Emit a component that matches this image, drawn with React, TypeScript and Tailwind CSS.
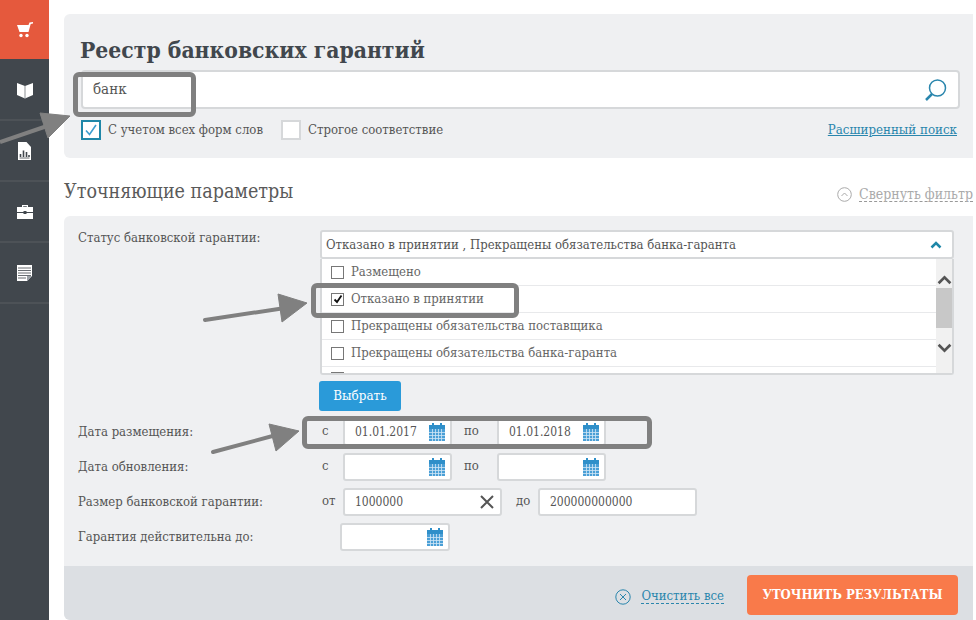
import { type ReactNode } from 'react';

const font = "font-['DejaVu_Serif_Condensed','DejaVu_Serif',serif]";

const CalendarIcon = () => (
  <svg width="16" height="18" viewBox="0 0 16 18" className="shrink-0">
    <rect x="3" y="0" width="2" height="3" fill="#2f8fc9" />
    <rect x="11" y="0" width="2" height="3" fill="#2f8fc9" />
    <rect x="0" y="2" width="16" height="4" fill="#2f8fc9" />
    <rect x="0" y="6" width="16" height="12" fill="#4a9fd6" />
    <path d="M3.5 6v12M6.5 6v12M9.5 6v12M12.5 6v12M0 9.5h16M0 12.5h16M0 15.5h16" stroke="#cfe6f5" strokeWidth="0.8" />
  </svg>
);

const Field = ({ width, value, icon }: { width: string; value?: string; icon?: ReactNode }) => (
  <div className={`flex h-[28px] items-center justify-between rounded-[3px] border-2 border-[#d6d8da] bg-white pl-[10px] pr-[5px] text-[12px] text-[#555] ${width}`}>
    <span>{value}</span>
    {icon}
  </div>
);

const Row = ({ label, children }: { label: string; children: ReactNode }) => (
  <div className="mt-[7px] flex h-[28px] items-center">
    <div className="w-[242px] text-[13px] text-[#555]">{label}</div>
    {children}
  </div>
);

const Prefix = ({ text, width }: { text: string; width: string }) => (
  <div className={`-mt-[3px] pl-[2px] text-[13px] text-[#555] ${width}`}>{text}</div>
);

const ListItem = ({ label, checked, className }: { label: string; checked?: boolean; className?: string }) => (
  <div className={`flex h-[27px] shrink-0 items-center gap-[7px] border-b border-[#e8e9eb] pl-[9px] text-[13px] text-[#666] ${className ?? ''}`}>
    <span className="flex h-[13px] w-[13px] items-center justify-center border border-[#777] bg-white">
      {checked && (
        <svg width="10" height="10" viewBox="0 0 10 10">
          <path d="M1.5 5.5l2.5 2.5 4.5-6.5" fill="none" stroke="#111" strokeWidth="1.8" />
        </svg>
      )}
    </span>
    {label}
  </div>
);

const SideItem = ({ children, active }: { children: ReactNode; active?: boolean }) => (
  <div className={`flex items-center justify-center ${active ? 'h-[60px] border-b border-[#41474d] bg-[#e5593d]' : 'h-[61px] border-b-2 border-[#4d5257]'}`}>
    {children}
  </div>
);

export default function App() {
  return (
    <div className={`relative flex h-[620px] w-[976px] overflow-hidden bg-white ${font}`}>
      <aside className="w-[49px] shrink-0 bg-[#41474d]">
        <SideItem active>
          <svg width="18" height="18" viewBox="0 0 18 18" fill="#fff">
            <path d="M1 4h11.5l1-2.5L17 1v1.5l-2.3.4L12.5 11H3.5z" />
            <circle cx="5" cy="14.5" r="1.7" />
            <circle cx="11" cy="14.5" r="1.7" />
          </svg>
        </SideItem>
        <SideItem>
          <svg width="18" height="18" viewBox="0 0 18 18" fill="#fff">
            <path d="M1 2l8 3 8-3v12l-8 3.5L1 14z" />
            <path d="M9 5v12" stroke="#41474d" strokeWidth="0.6" />
          </svg>
        </SideItem>
        <SideItem>
          <svg width="15" height="18" viewBox="0 0 15 18">
            <path d="M1 0h8.5L14 5v13H1z" fill="#fff" />
            <path d="M3.5 15v-3M6.5 15V8.5M9.5 15v-5M12 15v-2" stroke="#41474d" strokeWidth="1.6" />
            <path d="M2.5 16h10" stroke="#41474d" strokeWidth="0.8" />
          </svg>
        </SideItem>
        <SideItem>
          <svg width="16" height="16" viewBox="0 0 16 16" fill="#fff">
            <path d="M5 3V1h6v2h-1.2V2.2H6.200V3z" />
            <path d="M0 3h16v5H9.500V7h-3v1H0zM0 9h6.500v1h3V9H16v6H0z" />
          </svg>
        </SideItem>
        <SideItem>
          <svg width="15" height="16" viewBox="0 0 15 16">
            <path d="M0 0h15v11l-5 5H0z" fill="#fff" />
            <path d="M1 3h13M1 5.500h13M1 8h13M1 10.500h13M1 13h8" stroke="#41474d" strokeWidth="0.8" />
            <path d="M10 16v-5h5z" fill="#9aa0a5" />
          </svg>
        </SideItem>
      </aside>

      <main className="ml-[15px] mr-[3px] flex min-w-0 flex-1 flex-col pt-[14px]">
        <section className="h-[144px] rounded-l-[6px] bg-[#eff0f2] pl-[16px] pr-[13px] pt-[21px]">
          <h1 className="h-[35px] text-[22.700px] font-bold leading-[30px] text-[#41474d]">Реестр банковских гарантий</h1>
          <div className="ml-px flex h-[39px] items-center justify-between rounded-[4px] border-2 border-[#d6d8da] bg-white pl-[10px] pr-[10px] text-[15px] text-[#555]">
            банк
            <svg width="24" height="24" viewBox="0 0 24 24" fill="none" stroke="#2a86ad">
              <circle cx="13.500" cy="10" r="8" strokeWidth="1.500" />
              <path d="M8 16l-6 6" strokeWidth="2.500" />
            </svg>
          </div>
          <div className="ml-px mt-[11px] flex items-center pr-[3px] text-[13px] text-[#555]">
            <span className="flex h-[20px] w-[20px] items-center justify-center border-2 border-[#1f87a8] bg-white">
              <svg width="14" height="14" viewBox="0 0 14 14">
                <path d="M2 7.500l3.500 4L12 2" fill="none" stroke="#3d9fd0" strokeWidth="1.600" />
              </svg>
            </span>
            <span className="ml-[7px] w-[173px]">С учетом всех форм слов</span>
            <span className="h-[20px] w-[20px] border-2 border-[#d6d8da] bg-white" />
            <span className="ml-[7px]">Строгое соответствие</span>
            <a className="ml-auto text-[13.200px] text-[#2a86ad] underline">Расширенный поиск</a>
          </div>
        </section>

        <div className="flex h-[58px] items-center justify-between pt-[10px]">
          <h2 className="text-[19.500px] text-[#5a5a5a]">Уточняющие параметры</h2>
          <div className="flex items-center gap-[7px] pt-[4px] text-[14px] text-[#aaa]">
            <svg width="15" height="15" viewBox="0 0 15 15" fill="none" stroke="#aaa">
              <circle cx="7.500" cy="7.500" r="6.800" />
              <path d="M4.500 9l3-3 3 3" />
            </svg>
            <span className="whitespace-nowrap border-b border-dashed border-[#999] leading-[14px]">Свернуть фильтр</span>
          </div>
        </div>

        <section className="flex flex-1 flex-col rounded-l-[6px] bg-[#eff0f2]">
          <div className="h-[350px] px-[14px] pt-[14px]">
            <div className="flex">
              <div className="-mt-[2px] w-[242px] text-[13px] text-[#555]">Статус банковской гарантии:</div>
              <div className="w-[634px]">
                <div className="flex h-[29px] items-center justify-between rounded-[3px] border-2 border-[#d6d8da] bg-white pl-[4px] pr-[10px] text-[13px] text-[#555]">
                  Отказано в принятии , Прекращены обязательства банка-гаранта
                  <svg width="12" height="8" viewBox="0 0 12 8" fill="none" stroke="#1f87a8" strokeWidth="2.500">
                    <path d="M1.500 6.500L6 2l4.500 4.500" />
                  </svg>
                </div>
                <div className="flex h-[116px] overflow-hidden rounded-b-[3px] border-2 border-t-0 border-[#d6d8da] bg-white">
                  <div className="flex min-w-0 flex-1 flex-col">
                    <ListItem label="Размещено" />
                    <ListItem label="Отказано в принятии" checked />
                    <ListItem label="Прекращены обязательства поставщика" />
                    <ListItem label="Прекращены обязательства банка-гаранта" />
                    <ListItem label="" className="-mt-[2px]" />
                  </div>
                  <div className="flex w-[16px] shrink-0 flex-col items-center bg-[#f1f1f1] pt-[16px]">
                    <svg width="15" height="10" viewBox="0 0 14 9" fill="none" stroke="#555" strokeWidth="2.500">
                      <path d="M1.500 7.500L7 2l5.500 5.500" />
                    </svg>
                    <div className="mt-[3px] h-[40px] w-full bg-[#c8c8c8]" />
                    <svg className="mt-[15px]" width="15" height="10" viewBox="0 0 14 9" fill="none" stroke="#555" strokeWidth="2.500">
                      <path d="M1.500 1.500L7 7l5.500-5.500" />
                    </svg>
                  </div>
                </div>
                <button className="-ml-px mt-[6px] flex h-[30px] w-[82px] items-center justify-center rounded-[3px] bg-[#2a9ad9] text-[13.300px] text-white">
                  Выбрать
                </button>
              </div>
            </div>

            <div>
              <Row label="Дата размещения:">
                <Prefix text="с" width="w-[23px]" />
                <Field width="w-[109px]" value="01.01.2017" icon={<CalendarIcon />} />
                <Prefix text="по" width="w-[45px] pl-[12px]" />
                <Field width="w-[109px]" value="01.01.2018" icon={<CalendarIcon />} />
              </Row>
              <Row label="Дата обновления:">
                <Prefix text="с" width="w-[23px]" />
                <Field width="w-[109px]" icon={<CalendarIcon />} />
                <Prefix text="по" width="w-[45px] pl-[12px]" />
                <Field width="w-[109px]" icon={<CalendarIcon />} />
              </Row>
              <Row label="Размер банковской гарантии:">
                <Prefix text="от" width="w-[23px]" />
                <Field
                  width="w-[159px]"
                  value="1000000"
                  icon={
                    <svg width="14" height="14" viewBox="0 0 14 14" stroke="#555" strokeWidth="2" className="mr-[1px]">
                      <path d="M1 1l12 12M13 1L1 13" />
                    </svg>
                  }
                />
                <Prefix text="до" width="w-[36px] pl-[14px]" />
                <Field width="w-[159px]" value="200000000000" />
              </Row>
              <Row label="Гарантия действительна до:">
                <div className="w-[20px]" />
                <Field width="w-[110px]" icon={<CalendarIcon />} />
              </Row>
            </div>
          </div>

          <div className="flex flex-1 items-center justify-end rounded-bl-[6px] bg-[#dcdfe3] pr-[15px] pt-[4px]">
            <svg width="16" height="16" viewBox="0 0 16 16" fill="none" stroke="#2a86ad" className="mt-[3px]">
              <circle cx="8" cy="8" r="7.200" />
              <path d="M5 5l6 6M11 5l-6 6" />
            </svg>
            <span className="ml-[10px] mt-[3px] border-b border-dashed border-[#2a86ad] text-[13px] leading-[14px] text-[#2a86ad]">
              Очистить все
            </span>
            <button className="ml-[23px] h-[40px] w-[211px] rounded-[4px] bg-[#f97a4a] text-[13px] font-bold text-white">
              УТОЧНИТЬ РЕЗУЛЬТАТЫ
            </button>
          </div>
        </section>
      </main>

      {/* annotations drawn over the screenshot */}
      <div className="absolute left-[73px] top-[72px] h-[45px] w-[123px] rounded-[6px] border-[5px] border-[#808080]" />
      <div className="absolute left-[311px] top-[283px] h-[35px] w-[208px] rounded-[6px] border-[5px] border-[#808080]" />
      <div className="absolute left-[302px] top-[416px] h-[33px] w-[350px] rounded-[6px] border-[5px] border-[#808080]" />
      <svg width="976" height="620" className="pointer-events-none absolute left-0 top-0" fill="#808080" stroke="#808080">
        <path d="M0 142L50 125" strokeWidth="4" />
        <path d="M70 116L40 113L48 138Z" />
        <path d="M205 320L285 308" strokeWidth="4" strokeLinecap="round" />
        <path d="M307 303L278 294L282 322Z" />
        <path d="M213 452L280 434" strokeWidth="4" strokeLinecap="round" />
        <path d="M299 431L269 424L276 451Z" />
      </svg>
    </div>
  );
}
